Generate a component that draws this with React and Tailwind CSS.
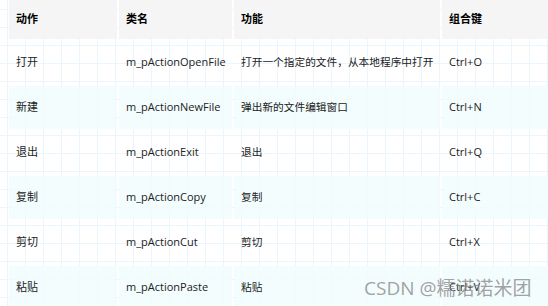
import React from 'react';

const rows = [
  { action: '打开', name: 'm_pActionOpenFile', desc: '打开一个指定的文件，从本地程序中打开', key: 'Ctrl+O' },
  { action: '新建', name: 'm_pActionNewFile', desc: '弹出新的文件编辑窗口', key: 'Ctrl+N' },
  { action: '退出', name: 'm_pActionExit', desc: '退出', key: 'Ctrl+Q' },
  { action: '复制', name: 'm_pActionCopy', desc: '复制', key: 'Ctrl+C' },
  { action: '剪切', name: 'm_pActionCut', desc: '剪切', key: 'Ctrl+X' },
  { action: '粘贴', name: 'm_pActionPaste', desc: '粘贴', key: 'Ctrl+V' },
];

const font = { fontFamily: '"Open Sans", "Noto Sans CJK SC", sans-serif' };

const App = () => {
  return (
    <div
      className="relative w-[548px] h-[306px] overflow-hidden bg-white bg-[linear-gradient(to_right,#eaf5fc_1px,transparent_1px),linear-gradient(to_bottom,#eaf5fc_1px,transparent_1px)] bg-[size:18px_18px] bg-[position:7px_9px] text-[11px] text-[#222]"
      style={font}
    >
      <div className="pl-[9px] grid grid-cols-[108px_113px_206px_120px] gap-[2px]">
        {/* header */}
        {['动作', '类名', '功能', '组合键'].map((h) => (
          <div key={h} className="h-[39px] flex items-center px-[7px] bg-[#f5f5f5] font-bold text-black">
            {h}
          </div>
        ))}

        {rows.map((r, i) => {
          const bg = i % 2 === 1 ? 'bg-[#f0fcfc]/80' : 'bg-transparent';
          return (
            <React.Fragment key={r.name}>
              <div className={`h-[43px] flex items-center px-[7px] ${bg}`}>{r.action}</div>
              <div className={`h-[43px] flex items-center px-[7px] ${bg}`}>{r.name}</div>
              <div className={`h-[43px] flex items-center px-[7px] whitespace-nowrap text-[10.7px] ${bg}`}>{r.desc}</div>
              <div className={`h-[43px] flex items-center px-[7px] ${bg}`}>{r.key}</div>
            </React.Fragment>
          );
        })}
      </div>

      {/* watermark */}
      <div className="absolute left-[364px] top-[276px] text-[19px] leading-[24px] text-[#8a8a8a]/80 whitespace-nowrap">
        CSDN @糯诺诺米团
      </div>
    </div>
  );
};

export default App;
